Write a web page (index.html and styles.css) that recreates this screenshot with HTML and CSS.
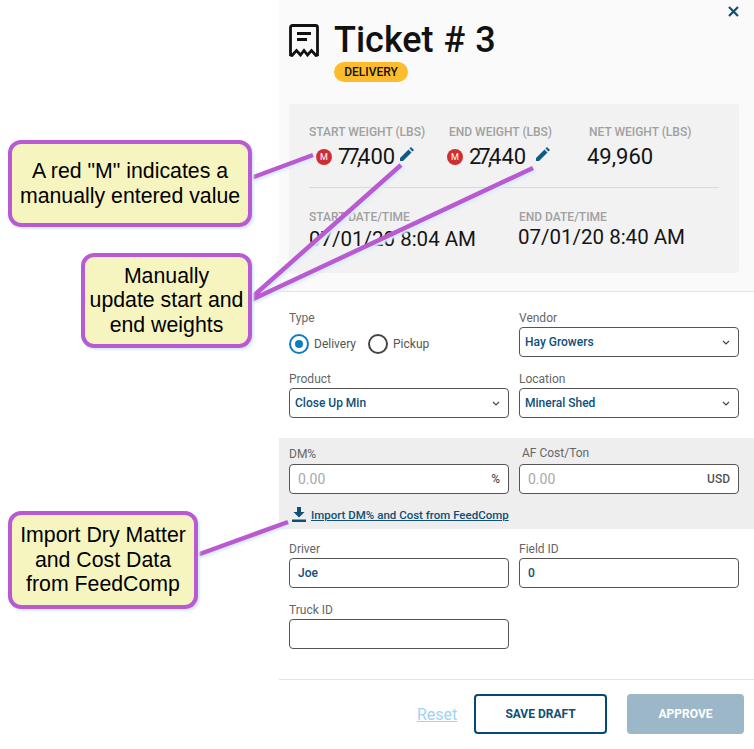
FILE: index.html
```html
<!DOCTYPE html>
<html lang="en">
  <head>
    <meta charset="UTF-8" />
    <title>Ticket # 3</title>
    <link rel="stylesheet" href="styles.css">
  </head>
  <body>
    <div class="page">
      <aside class="notes"></aside>
      <main class="panel">
        <section class="summary">
          <button class="close" aria-label="Close">
            <svg width="11" height="11" viewBox="0 0 11 11"><path d="M1 1l9 9M10 1l-9 9" /></svg>
          </button>
          <header class="head">
            <svg class="receipt" width="30" height="33" viewBox="0 0 30 33">
              <path d="M1.500 31V3.500a2 2 0 0 1 2-2h23a2 2 0 0 1 2 2V31l-1.500.5-4.500-5-4 4.500-3.500-4.500-3.500 4.500-4-4.500-4.500 5z" />
              <path d="M8 9.500h14M8 15.500h10" />
            </svg>
            <div>
              <h1>Ticket # 3</h1>
              <span class="badge">DELIVERY</span>
            </div>
          </header>
          <div class="stats">
            <div class="weights">
              <div class="stat">
                <h4>START WEIGHT (LBS)</h4>
                <p class="value first"><i class="manual">M</i><span class="tight">77,</span>400<svg class="pencil" viewBox="0 0 14 14"><path d="M0 14v-3L8.500 2.500l3 3L3 14zM9.500 1.500 11 0l3 3-1.500 1.500z" /></svg></p>
              </div>
              <div class="stat">
                <h4>END WEIGHT (LBS)</h4>
                <p class="value second"><i class="manual">M</i><span class="tight">27,</span>440<svg class="pencil far" viewBox="0 0 14 14"><path d="M0 14v-3L8.500 2.500l3 3L3 14zM9.500 1.500 11 0l3 3-1.500 1.500z" /></svg></p>
              </div>
              <div class="stat">
                <h4>NET WEIGHT (LBS)</h4>
                <p class="value net">49,960</p>
              </div>
            </div>
            <div class="dates">
              <div class="stat">
                <h4>START DATE/TIME</h4>
                <p class="value">07/01/20 8:04 AM</p>
              </div>
              <div class="stat end">
                <h4>END DATE/TIME</h4>
                <p class="value">07/01/20 8:40 AM</p>
              </div>
            </div>
          </div>
        </section>

        <form class="form">
          <div class="grid">
            <div class="field">
              <label>Type</label>
              <div class="radios">
                <span class="radio on"></span><span class="radio-text">Delivery</span>
                <span class="radio"></span><span class="radio-text">Pickup</span>
              </div>
            </div>
            <div class="field">
              <label>Vendor</label>
              <div class="box">Hay Growers<svg class="chev" width="8" height="5" viewBox="0 0 8 5"><path d="M1 1l3 3 3-3" /></svg></div>
            </div>
            <div class="field">
              <label>Product</label>
              <div class="box">Close Up Min<svg class="chev" width="8" height="5" viewBox="0 0 8 5"><path d="M1 1l3 3 3-3" /></svg></div>
            </div>
            <div class="field">
              <label>Location</label>
              <div class="box">Mineral Shed<svg class="chev" width="8" height="5" viewBox="0 0 8 5"><path d="M1 1l3 3 3-3" /></svg></div>
            </div>
          </div>

          <div class="costs">
            <div class="grid">
              <div class="field">
                <label>DM%</label>
                <div class="box entry"><span class="hint">0.00</span><b class="unit">%</b></div>
              </div>
              <div class="field">
                <label class="shifted">AF Cost/Ton</label>
                <div class="box entry"><span class="hint">0.00</span><b class="unit">USD</b></div>
              </div>
            </div>
            <a class="import" href="#">
              <svg width="14" height="15" viewBox="0 0 14 15"><path d="M5 0h4v5h3.500L7 10.500 1.500 5H5zM0 12.500h14V15H0z" /></svg>
              Import DM% and Cost from FeedComp
            </a>
          </div>

          <div class="grid">
            <div class="field">
              <label>Driver</label>
              <div class="box entry">Joe</div>
            </div>
            <div class="field">
              <label>Field ID</label>
              <div class="box entry">0</div>
            </div>
            <div class="field">
              <label>Truck ID</label>
              <div class="box entry"></div>
            </div>
          </div>
        </form>

        <footer class="actions">
          <a class="reset" href="#">Reset</a>
          <button class="btn draft">SAVE DRAFT</button>
          <button class="btn approve">APPROVE</button>
        </footer>
      </main>
    </div>

    <svg class="leaders" width="754" height="749" viewBox="0 0 754 749">
      <path d="M251 178 313 155M251 298 401 165M251 300 533 168M197 555 288 522" />
    </svg>
    <div class="note note-m">A red "M" indicates a<br>manually entered value</div>
    <div class="note note-w">Manually<br>update start and<br>end weights</div>
    <div class="note note-i">Import Dry Matter<br>and Cost Data<br>from FeedComp</div>
  </body>
</html>
```

FILE: styles.css
```css
* {
  box-sizing: border-box;
}
body {
  margin: 0;
  height: 749px;
  overflow: hidden;
  background: #fff;
  font-family: Roboto, "Noto Sans", sans-serif;
  color: #111;
}
h1,
h4,
p {
  margin: 0;
}
.page {
  display: flex;
}
.notes {
  width: 279px;
  flex: none;
}
.panel {
  width: 475px;
  flex: none;
}

/* top part */
.summary {
  position: relative;
  height: 292px;
  padding: 24px 15px 0 10px;
  background: #fafafa;
  border-bottom: 1px solid #e4e4e4;
}
.close {
  position: absolute;
  top: 6px;
  right: 15px;
  width: 11px;
  height: 11px;
  padding: 0;
  border: 0;
  background: none;
  svg {
    display: block;
    fill: none;
    stroke: #0f4f78;
    stroke-width: 2.2;
  }
}
.head {
  display: flex;
  gap: 15px;
  height: 80px;
  h1 {
    font-size: 36px;
    font-weight: 500;
    line-height: 32px;
    margin-bottom: 6px;
    word-spacing: 1px;
  }
}
.receipt {
  fill: none;
  stroke: #111;
  stroke-width: 2.800;
}
.badge {
  display: block;
  width: 74px;
  height: 20px;
  border-radius: 10px;
  background: #fdbb2e;
  font-size: 12px;
  font-weight: 500;
  line-height: 20px;
  text-align: center;
}
.stats {
  height: 169px;
  padding: 21px 20px 0;
  background: #f2f2f2;
  border-radius: 3px;
}
.weights {
  display: grid;
  grid-template-columns: 140px 140px 130px;
  height: 63px;
  border-bottom: 1px solid #d9d9d9;
}
.stat h4 {
  font-size: 12px;
  font-weight: 500;
  line-height: 14px;
  color: #a0a0a0;
}
.value {
  display: flex;
  align-items: center;
  margin-top: 3px;
  font-size: 22px;
  line-height: 30px;
  color: #151515;
  white-space: nowrap;
}
.value.first {
  padding-left: 7px;
}
.value.second {
  margin-left: -2px;
}
.value.net {
  margin-left: -2px;
}
.tight {
  letter-spacing: -3px;
}
.manual {
  width: 16px;
  height: 16px;
  margin-right: 6px;
  border-radius: 50%;
  background: #cf2f33;
  color: #fff;
  font-size: 9px;
  font-style: normal;
  line-height: 16px;
  text-align: center;
}
.pencil {
  width: 14px;
  height: 14px;
  margin: -6px 0 0 5px;
  fill: #0f5c88;
}
.pencil.far {
  margin-left: 10px;
}
.dates {
  display: grid;
  grid-template-columns: 210px 200px;
  padding-top: 22px;
  .value {
    margin-top: 1px;
    font-size: 20.500px;
    line-height: 28px;
  }
  .end .value {
    margin: -1px 0 0 -1px;
  }
}

/* form */
.form {
  height: 388px;
  border-bottom: 1px solid #e4e4e4;
}
.grid {
  display: grid;
  grid-template-columns: 220px 220px;
  gap: 14px 10px;
  padding: 0 15px 0 10px;
}
.form > .grid:first-child {
  padding-top: 18px;
}
.form > .grid:last-child {
  padding-top: 12px;
}
.field label {
  display: block;
  height: 17px;
  font-size: 12px;
  line-height: 16px;
  color: #666;
}
.costs .field label {
  line-height: 14px;
}
.costs .field .shifted {
  margin-left: 3px;
  line-height: 12px;
}
.box {
  position: relative;
  display: flex;
  align-items: center;
  height: 30px;
  padding: 0 5px;
  background: #fff;
  border: 1px solid #555;
  border-radius: 4px;
  font-size: 12px;
  font-weight: 500;
  color: #0f4f78;
}
.box.entry {
  padding: 0 8px;
}
.chev {
  margin-left: auto;
  margin-right: 3px;
  fill: none;
  stroke: #444;
  stroke-width: 1.2;
}
.radios {
  display: flex;
  align-items: center;
  height: 20px;
  margin-top: 7px;
}
.radio {
  position: relative;
  width: 20px;
  height: 20px;
  border: 2px solid #444;
  border-radius: 50%;
  &.on {
    border-color: #0f7cc0;
    &::after {
      content: "";
      position: absolute;
      inset: 4px;
      border-radius: 50%;
      background: #0f7cc0;
    }
  }
}
.radio-text {
  margin: 0 12px 0 5px;
  font-size: 12px;
  color: #555;
}
.costs {
  height: 91px;
  margin-top: 20px;
  padding-top: 9px;
  background: #eee;
}
.hint {
  font-weight: 400;
  font-size: 14px;
  color: #a8a8a8;
}
.unit {
  margin-left: auto;
  font-size: 12px;
  font-weight: 500;
  color: #555;
}
.import {
  display: flex;
  align-items: center;
  gap: 5px;
  margin: 13px 0 0 13px;
  font-size: 11.500px;
  font-weight: 500;
  color: #0f4f78;
  svg {
    fill: #0f4f78;
  }
}
.actions {
  display: flex;
  align-items: center;
  height: 68px;
  padding: 0 10px 0 138px;
}
.reset {
  width: 57px;
  font-size: 16px;
  color: #9bd4f5;
}
.btn {
  height: 40px;
  border-radius: 4px;
  font-family: inherit;
  font-size: 12px;
  font-weight: 700;
}
.draft {
  width: 133px;
  background: #fff;
  border: 2px solid #004a73;
  color: #0f4f78;
}
.approve {
  width: 117px;
  margin-left: 20px;
  border: 0;
  background: #9cb7c8;
  color: #fff;
}

/* callouts drawn over the screenshot */
.leaders {
  position: absolute;
  top: 0;
  left: 0;
  filter: drop-shadow(2px 2px 1px #d9ecfb);
  path {
    fill: none;
    stroke: #b95ad2;
    stroke-width: 4.500;
  }
}
.note {
  position: absolute;
  display: flex;
  align-items: center;
  justify-content: center;
  background: #f7f5bf;
  border: 4px solid #b95ad2;
  border-radius: 13px;
  box-shadow: 2px 2px 2px #d9ecfb;
  font-family: "Liberation Sans", Arial, sans-serif;
  font-size: 21.300px;
  line-height: 24.500px;
  text-align: center;
  color: #000;
}
.note-m {
  top: 140px;
  left: 8px;
  width: 244px;
  height: 87px;
}
.note-w {
  top: 253px;
  left: 81px;
  width: 171px;
  height: 95px;
}
.note-i {
  top: 511px;
  left: 8px;
  width: 190px;
  height: 98px;
}
```
